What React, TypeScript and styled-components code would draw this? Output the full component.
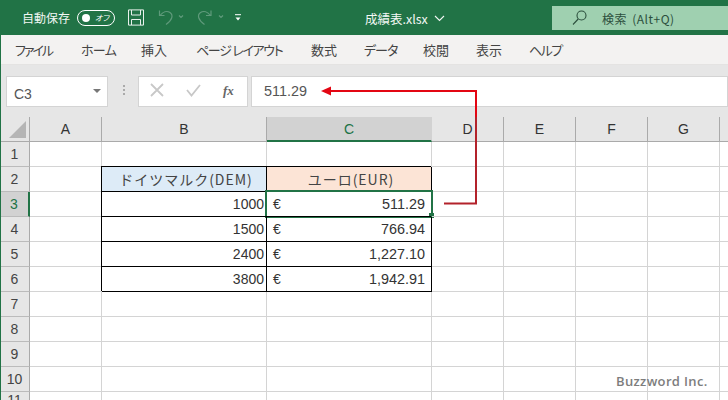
import React from "react";
import styled, { createGlobalStyle } from "styled-components";

const Global = createGlobalStyle`
  html, body { margin: 0; padding: 0; width: 728px; height: 400px; overflow: hidden; background: #fff; }
  body { font-family: "Noto Sans CJK JP", "Noto Sans", sans-serif; }
`;
const Page = styled.div`
  position: relative; width: 728px; height: 400px; overflow: hidden;
  display: flex; flex-direction: column; background: #e6e6e6;
  border-left: 1px solid #217346; box-sizing: border-box;
`;
const TitleBar = styled.div`
  height: 35px; margin-left: -1px; background: #217346; color: #fff; display: flex; align-items: center; flex: none;
`;
const AutoSave = styled.span`font-size: 12px; margin-left: 22px; width: 48px; white-space: nowrap; color: #f2f7f4;`;
const Toggle = styled.div`
  width: 38px; height: 16px; margin-left: 7px; border: 1px solid #fff; border-radius: 9px; display: flex; align-items: center;
  justify-content: space-between; padding: 0 5px 0 4px; box-sizing: border-box; font-size: 8px; font-style: italic; color: #fff; flex: none; white-space: nowrap;
  font-feature-settings: "palt";
  &::before { content: ""; width: 8px; height: 8px; background: #fff; border-radius: 50%; flex: none; }
`;
const IconSlot = styled.span<{ $ml: number }>`display: inline-flex; margin-left: ${p => p.$ml}px; flex: none;`;
const FileName = styled.div`
  margin-left: 123px; margin-top: 2px; display: flex; align-items: center; gap: 6px; font-size: 12.5px; color: #f2f7f4; line-height: 20px; white-space: nowrap; flex: none;
`;
const Search = styled.div`
  margin-left: auto; align-self: flex-start; margin-top: 6px; width: 176px; height: 24px; background: #9fd0b0; display: flex; align-items: center;
  font-size: 12px; letter-spacing: .5px; word-spacing: 2px; color: #2c4f3d; white-space: nowrap; flex: none;
  svg { margin-left: 20px; margin-right: 15px; flex: none; }
`;
const Ribbon = styled.div`
  height: 30px; background: #f3f2f1; display: flex; align-items: center; flex: none; font-size: 13px; color: #444; box-sizing: border-box;
  border-bottom: 1px solid #e4e3e2; font-feature-settings: "palt";
`;
const Tab = styled.span<{ $x: number; $w: number; $ls: number }>`
  margin-left: ${p => p.$x}px; width: ${p => p.$w}px; letter-spacing: ${p => p.$ls}px; white-space: nowrap; flex: none;
`;
const FormulaRow = styled.div`
  height: 52px; flex: none; display: flex; align-items: flex-start; padding-top: 11px; box-sizing: border-box; background: #e6e6e6;
`;
const Field = styled.div<{ $w: number; $ml: number }>`
  width: ${p => p.$w}px; margin-left: ${p => p.$ml}px; height: 31px; background: #fff; border: 1px solid #d4d4d4; box-sizing: border-box; display: flex; align-items: center; flex: none;
  position: relative;
`;
const NameText = styled.span`font: 14px "Liberation Sans", sans-serif; color: #555; margin-left: 7px; margin-top: 5px; flex: 1;`;
const Caret = styled.span`width: 0; height: 0; border: 4px solid transparent; border-top: 4px solid #777; border-bottom: 0; margin-right: 6px; margin-top: -1px;`;
const Dots = styled.div`width: 2px; margin-left: 15px; height: 12px; flex: none; margin-top: 9px; background: repeating-linear-gradient(#aaa 0 2px, transparent 2px 4px);`;
const FormulaText = styled.span`font: 14.4px "Liberation Sans", sans-serif; color: #555; margin-left: 12px; margin-top: -1px;`;
const Fx = styled.span`position: absolute; left: 84px; top: 6px; font: italic bold 13px "Liberation Serif", serif; color: #666;`;
const Sheet = styled.div`
  flex: 1; display: grid; background: #fff; margin-left: -1px;
  grid-template-columns: 30px 72px 165px 165px 72px 72px 72px 72px 1fr;
  grid-template-rows: 25px repeat(10, 25px) 1fr;
  font: 13px "Liberation Sans", sans-serif; color: #222;
`;
const Corner = styled.div`
  background: #e6e6e6; border-right: 1px solid #aaa; border-bottom: 1px solid #aaa; position: relative;
  &::after { content: ""; position: absolute; right: 3px; bottom: 3px; border-style: solid; border-width: 0 0 17px 17px; border-color: transparent transparent #b5b5b5 transparent; }
`;
const ColHead = styled.div<{ $active?: boolean }>`
  background: ${p => p.$active ? "#d2d2d2" : "#e6e6e6"}; color: ${p => p.$active ? "#217346" : "#333"};
  border-right: 1px solid ${p => p.$active ? "#d2d2d2" : "#aaa"}; border-bottom: ${p => p.$active ? "2px solid #217346" : "1px solid #aaa"};
  box-sizing: border-box; display: flex; align-items: center; justify-content: center; font-size: 14px;
`;
const RowHead = styled.div<{ $active?: boolean }>`
  background: ${p => p.$active ? "#d2d2d2" : "#e6e6e6"}; color: ${p => p.$active ? "#217346" : "#444"};
  border-right: ${p => p.$active ? "2px solid #217346" : "1px solid #aaa"}; border-bottom: 1px solid #bbb;
  box-sizing: border-box; display: flex; align-items: center; justify-content: center; font-size: 14px; padding-right: 1px;
  border-left: 1px solid #217346;
`;
const Cell = styled.div<{ $boxed?: boolean; $bg?: string; $center?: boolean; $right?: boolean }>`
  position: relative; box-sizing: border-box; display: flex; align-items: center; white-space: nowrap; padding: 0 2px 0 6px; overflow: visible;
  justify-content: ${p => p.$center ? "center" : p.$right ? "flex-end" : "space-between"};
  background: ${p => p.$bg ?? "transparent"};
  border-right: 1px solid ${p => p.$boxed ? "#000" : "#d4d4d4"};
  border-bottom: 1px solid ${p => p.$boxed ? "#000" : "#d4d4d4"};
  ${p => p.$boxed ? "box-shadow: -1px -1px 0 #000;" : ""}
  ${p => p.$center ? `font: 14px "Noto Sans CJK JP", sans-serif; color: #444; letter-spacing: 1px;` : "font-size: 14px; color: #333;"}
`;
const Amount = styled.span`margin-right: 4px; font-size: 14.4px;`;
const Selection = styled.div`
  position: absolute; left: -2px; top: -2px; right: -2px; bottom: -2px; border: 2px solid #217346; pointer-events: none;
  &::after { content: ""; position: absolute; right: -3px; bottom: -2px; width: 5px; height: 5px; background: #217346; }
`;
const Overlay = styled.svg`position: absolute; left: -1px; top: 0; pointer-events: none;`;
const Watermark = styled.div`position: absolute; left: 615px; top: 372px; font: 600 13px "Open Sans", sans-serif; letter-spacing: .35px; color: #7d7d7d; white-space: nowrap;`;

const cols = ["A", "B", "C", "D", "E", "F", "G", ""];
const rows: Record<number, [string, string]> = {
  3: ["1000", "511.29"], 4: ["1500", "766.94"], 5: ["2400", "1,227.10"], 6: ["3800", "1,942.91"],
};

export default function App() {
  const grid: React.ReactNode[] = [];
  for (let r = 1; r <= 11; r++) {
    grid.push(<RowHead key={`h${r}`} $active={r === 3}>{r}</RowHead>);
    for (let c = 0; c < 8; c++) {
      const k = `${r}-${c}`;
      if (r === 2 && c === 1) grid.push(<Cell key={k} $boxed $center $bg="#ddebf7">ドイツマルク(DEM)</Cell>);
      else if (r === 2 && c === 2) grid.push(<Cell key={k} $boxed $center $bg="#fce4d6">ユーロ(EUR)</Cell>);
      else if (rows[r] && c === 1) grid.push(<Cell key={k} $boxed $right>{rows[r][0]}</Cell>);
      else if (rows[r] && c === 2) grid.push(
        <Cell key={k} $boxed><span>€</span><Amount>{rows[r][1]}</Amount>{r === 3 && <Selection />}</Cell>
      );
      else grid.push(<Cell key={k} />);
    }
  }
  return (
    <Page>
      <Global />
      <TitleBar>
        <AutoSave>自動保存</AutoSave>
        <Toggle>オフ</Toggle>
        <IconSlot $ml={13}>
          <svg width="16" height="17" viewBox="0 0 16 17" fill="none" stroke="#e8f1ec" strokeWidth="1"><path d="M.5.9h15v15.2H.5zM3.500 1v5h9V1M3.500 16v-5.500h9V16" /></svg>
        </IconSlot>
        <IconSlot $ml={14}>
          <svg width="34" height="18" viewBox="0 0 34 18" fill="none" stroke="#5f9a7b" strokeWidth="1.2"><path d="M1.500 1.500v5h5M2 6.500C5 2.500 9 1.500 12 3.500c3.500 2.500 2.500 7.500-4 12" /><path d="M21 6.500l2 2 2-2" /></svg>
        </IconSlot>
        <IconSlot $ml={5}>
          <svg width="30" height="18" viewBox="0 0 30 18" fill="none" stroke="#5f9a7b" strokeWidth="1.2"><path d="M14 1.500v5h-5M13.500 6.500C10.500 2.500 6.500 1.500 3.500 3.500c-3.500 2.500-2.500 7.500 4 12" /><path d="M22 6.500l2 2 2-2" /></svg>
        </IconSlot>
        <IconSlot $ml={7}>
          <svg width="8" height="8" viewBox="0 0 8 8" fill="none" stroke="#fff"><path d="M1 .7h6" /><path d="M1.500 3.500L4 6.500l2.500-3z" fill="#fff" stroke="none" /></svg>
        </IconSlot>
        <FileName>成績表.xlsx
          <svg width="11" height="7" viewBox="0 0 11 7" fill="none" stroke="#f2f7f4" strokeWidth="1.1"><path d="M1 1l4.500 4.500L10 1" /></svg>
        </FileName>
        <Search>
          <svg width="15" height="16" viewBox="0 0 15 16" fill="none" stroke="#2c4f3d" strokeWidth="1.100"><circle cx="9.500" cy="5.500" r="4.500" /><path d="M6.200 9L1 14.500" /></svg>
          検索 (Alt+Q)
        </Search>
      </TitleBar>
      <Ribbon>
        <Tab $x={14} $w={37} $ls={-2}>ファイル</Tab>
        <Tab $x={29} $w={32} $ls={-.7}>ホーム</Tab>
        <Tab $x={28} $w={26} $ls={0}>挿入</Tab>
        <Tab $x={29} $w={85} $ls={-1.3}>ページ レイアウト</Tab>
        <Tab $x={30} $w={26} $ls={0}>数式</Tab>
        <Tab $x={27} $w={32} $ls={-1}>データ</Tab>
        <Tab $x={27} $w={25} $ls={0}>校閲</Tab>
        <Tab $x={28} $w={26} $ls={0}>表示</Tab>
        <Tab $x={27} $w={32} $ls={-1.5}>ヘルプ</Tab>
      </Ribbon>
      <FormulaRow>
        <Field $w={102} $ml={5}><NameText>C3</NameText><Caret /></Field>
        <Dots />
        <Field $w={110} $ml={13}>
          <svg width="82" height="29" viewBox="0 0 82 29" fill="none" strokeWidth="1.800">
            <path d="M12 7l12 12M24 7L12 19" stroke="#c8c8c8" />
            <path d="M48 13l4.500 5.500L61 8" stroke="#c8c8c8" />
          </svg>
          <Fx>fx</Fx>
        </Field>
        <Field $w={477} $ml={3}><FormulaText>511.29</FormulaText></Field>
      </FormulaRow>
      <Sheet>
        <Corner />
        {cols.map((c, i) => <ColHead key={i} $active={c === "C"}>{c}</ColHead>)}
        {grid}
      </Sheet>
      <Overlay width="728" height="400" viewBox="0 0 728 400" fill="none">
        <path d="M444 203.500h32V117" stroke="#b3222b" strokeWidth="2" />
        <path d="M476 117V91H330" stroke="#e30613" strokeWidth="2" />
        <path d="M321 91l10-4.500v9z" fill="#e30613" />
      </Overlay>
      <Watermark>Buzzword Inc.</Watermark>
    </Page>
  );
}
